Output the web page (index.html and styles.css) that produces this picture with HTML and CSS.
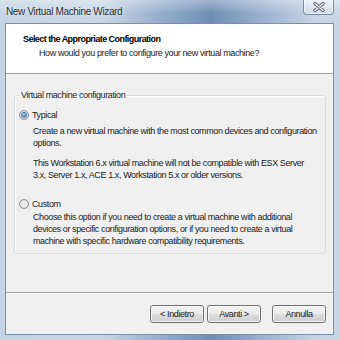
FILE: index.html
```html
<!DOCTYPE html>
<html lang="en">
<head>
  <meta charset="UTF-8">
  <title>New Virtual Machine Wizard</title>
  <link rel="stylesheet" href="styles.css">
</head>
<body>
  <div class="window">
    <div class="titlebar">
      <span class="title">New Virtual Machine Wizard</span>
      <button class="close" aria-label="Close">
        <svg width="14" height="10" viewBox="0 0 14 10">
          <path d="M3 1.5 L11 8.5 M11 1.5 L3 8.5" stroke="#4b5566" stroke-width="3.2" stroke-linecap="round"/>
          <path d="M3 1.5 L11 8.5 M11 1.5 L3 8.5" stroke="#f4f6f9" stroke-width="1.6" stroke-linecap="round"/>
        </svg>
      </button>
    </div>
    <div class="client">
      <div class="header">
        <div class="header-title">Select the Appropriate Configuration</div>
        <div class="header-sub">How would you prefer to configure your new virtual machine?</div>
      </div>
      <div class="content">
        <fieldset class="group">
          <legend>Virtual machine configuration</legend>
          <div class="option">
            <span class="radio checked"></span>Typical
          </div>
          <p class="desc">Create a new virtual machine with the most common devices and configuration<br>options.</p>
          <p class="desc note">This Workstation 6.x virtual machine will not be compatible with ESX Server<br>3.x, Server 1.x, ACE 1.x, Workstation 5.x or older versions.</p>
          <div class="option custom">
            <span class="radio"></span>Custom
          </div>
          <p class="desc tight">Choose this option if you need to create a virtual machine with additional<br>devices or specific configuration options, or if you need to create a virtual<br>machine with specific hardware compatibility requirements.</p>
        </fieldset>
      </div>
      <div class="footer">
        <button class="btn">&lt; Indietro</button>
        <button class="btn">Avanti &gt;</button>
        <button class="btn cancel">Annulla</button>
      </div>
    </div>
  </div>
</body>
</html>
```

FILE: styles.css
```css
* { box-sizing: border-box; }
body { margin: 0; font-family: 'Liberation Sans', Arial, sans-serif; }
.window { width: 340px; height: 340px; padding: 0 6px 5px 5px; display: flex; flex-direction: column;
  background: linear-gradient(90deg, #c4d3e5 0%, #c9d6e6 30%, #8da7c8 50%, #6f8db4 62%, #9db3d0 78%, #c5d3e4 92%, #c9d6e6 100%); }
.titlebar { height: 23px; display: flex; align-items: flex-start; justify-content: space-between; margin: 0 -6px 0 -5px; padding: 0 6px 0 6px;
  background: linear-gradient(180deg, rgba(255,255,255,0.35), rgba(255,255,255,0) 60%); }
.title { font-size: 10px; letter-spacing: -0.35px; color: #2b323c; line-height: 12px; margin-top: 6px; text-shadow: 0 0 4px rgba(255,255,255,0.8); }
.close { width: 31px; height: 16px; margin-top: -1px; border: 1px solid #7c8ca3; border-top: none; border-radius: 0 0 4px 4px; padding: 0;
  display: flex; align-items: center; justify-content: center;
  background: linear-gradient(180deg, rgba(255,255,255,0.55), rgba(220,230,242,0.45)); box-shadow: inset 0 0 0 1px rgba(255,255,255,0.5); }
.client { flex: 1; display: flex; flex-direction: column; border: 1px solid #7d8fa8; background: #f0f0f0; font-size: 9px; letter-spacing: -0.4px; color: #1a1a1a; }
.header { height: 50px; background: #fff; border-bottom: 1px solid #a0a0a0; padding: 9px 0 0 17px; }
.header-title { font-weight: bold; line-height: 12px; letter-spacing: -0.55px; color: #000; }
.header-sub { line-height: 12px; margin: 2px 0 0 16px; }
.content { flex: 1; padding: 15px 7px 0 8px; border-bottom: 1px solid #a0a0a0; box-shadow: 0 1px 0 #fff; }
.group { margin: 0; border: 1px solid #d5dfe5; border-radius: 3px; padding: 0 4px 6px 4px; height: 165px; box-shadow: inset 1px 1px 0 #fff; }
.group legend { padding: 0 2px; line-height: 12px; }
.option { display: flex; align-items: center; line-height: 12px; margin-top: 8px; }
.option.custom { margin-top: 17px; }
.radio { width: 10px; height: 10px; border-radius: 50%; border: 1px solid #8e8f8f; margin-right: 3px;
  background: radial-gradient(circle, #f4f4f4 0%, #dcdcdc 100%); display: inline-flex; align-items: center; justify-content: center; }
.radio.checked::after { content: ''; width: 4px; height: 4px; border-radius: 50%; background: radial-gradient(circle at 40% 35%, #a9d4f5, #1e5d9c); box-shadow: 0 0 0 1px #4a7fb5; }
.desc { margin: 4px 0 0 14px; line-height: 12px; }
.desc.note { margin-top: 8px; }
.desc.tight { margin-top: 1px; }
.footer { height: 41px; display: flex; justify-content: flex-end; align-items: flex-start; padding: 12px 7px 0 0; }
.btn { width: 54px; height: 18px; margin-left: 3px; padding: 0; font-family: inherit; font-size: 9px; letter-spacing: -0.4px; color: #1a1a1a;
  border: 1px solid #707070; border-radius: 3px;
  background: linear-gradient(180deg, #f2f2f2 0%, #ebebeb 49%, #dddddd 50%, #cfcfcf 100%); box-shadow: inset 0 0 0 1px rgba(255,255,255,0.7); }
.btn.cancel { margin-left: 11px; }
```
